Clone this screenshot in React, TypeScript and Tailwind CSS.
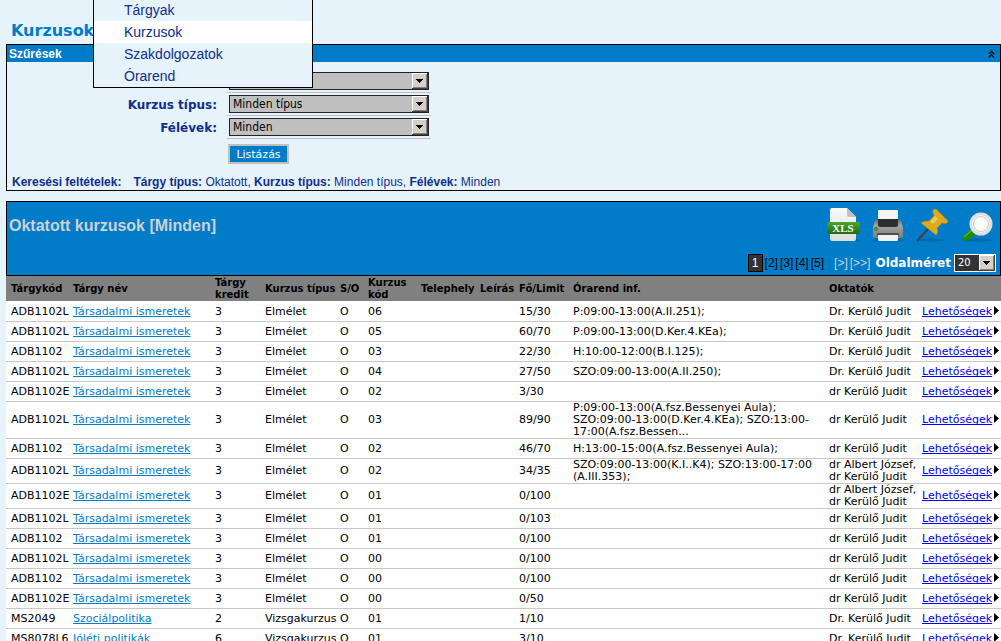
import { ReactNode } from "react";

type Course = {
  code: string;
  name: string;
  credit: number;
  type: string;
  group: string;
  limit: string;
  schedule?: string[];
  teachers: string[];
};

const social = { name: "Társadalmi ismeretek", credit: 3, type: "Elmélet" };

const courses: Course[] = [
  { ...social, code: "ADB1102L", group: "06", limit: "15/30", schedule: ["P:09:00-13:00(A.II.251);"], teachers: ["Dr. Kerülő Judit"] },
  { ...social, code: "ADB1102L", group: "05", limit: "60/70", schedule: ["P:09:00-13:00(D.Ker.4.KEa);"], teachers: ["Dr. Kerülő Judit"] },
  { ...social, code: "ADB1102", group: "03", limit: "22/30", schedule: ["H:10:00-12:00(B.I.125);"], teachers: ["Dr. Kerülő Judit"] },
  { ...social, code: "ADB1102L", group: "04", limit: "27/50", schedule: ["SZO:09:00-13:00(A.II.250);"], teachers: ["Dr. Kerülő Judit"] },
  { ...social, code: "ADB1102E", group: "02", limit: "3/30", teachers: ["dr Kerülő Judit"] },
  {
    ...social,
    code: "ADB1102L",
    group: "03",
    limit: "89/90",
    schedule: ["P:09:00-13:00(A.fsz.Bessenyei Aula);", "SZO:09:00-13:00(D.Ker.4.KEa); SZO:13:00-", "17:00(A.fsz.Bessen..."],
    teachers: ["dr Kerülő Judit"],
  },
  { ...social, code: "ADB1102", group: "02", limit: "46/70", schedule: ["H:13:00-15:00(A.fsz.Bessenyei Aula);"], teachers: ["dr Kerülő Judit"] },
  {
    ...social,
    code: "ADB1102L",
    group: "02",
    limit: "34/35",
    schedule: ["SZO:09:00-13:00(K.I..K4); SZO:13:00-17:00", "(A.III.353);"],
    teachers: ["dr Albert József,", "dr Kerülő Judit"],
  },
  { ...social, code: "ADB1102E", group: "01", limit: "0/100", teachers: ["dr Albert József,", "dr Kerülő Judit"] },
  { ...social, code: "ADB1102L", group: "01", limit: "0/103", teachers: ["dr Kerülő Judit"] },
  { ...social, code: "ADB1102", group: "01", limit: "0/100", teachers: ["dr Kerülő Judit"] },
  { ...social, code: "ADB1102L", group: "00", limit: "0/100", teachers: ["dr Kerülő Judit"] },
  { ...social, code: "ADB1102", group: "00", limit: "0/100", teachers: ["dr Kerülő Judit"] },
  { ...social, code: "ADB1102E", group: "00", limit: "0/50", teachers: ["dr Kerülő Judit"] },
  { code: "MS2049", name: "Szociálpolitika", credit: 2, type: "Vizsgakurzus", group: "01", limit: "1/10", teachers: ["Dr. Kerülő Judit"] },
  { code: "MS8078L6", name: "Jóléti politikák", credit: 6, type: "Vizsgakurzus", group: "01", limit: "3/10", teachers: ["Dr. Kerülő Judit"] },
];

const menuItems = ["Tárgyak", "Kurzusok", "Szakdolgozatok", "Órarend"];

const Menu = () => (
  <nav className="absolute top-0 left-[93px] z-10 w-[220px] border border-t-0 border-black bg-[#e6f3fb] font-['Liberation_Sans',Arial,sans-serif] text-sm text-[#0f2f8a]">
    {menuItems.map((item) => (
      <a key={item} href="#" className={`block h-[22px] pl-[30px] leading-[22px] first:h-[21px] first:leading-5 ${item === "Kurzusok" ? "bg-white" : ""}`}>
        {item}
      </a>
    ))}
  </nav>
);

const DropButton = ({ className }: { className: string }) => (
  <svg className={className} viewBox="0 0 16 16" shapeRendering="crispEdges" aria-hidden="true">
    <rect width="16" height="16" fill="#404040" />
    <rect width="15" height="15" fill="#fff" />
    <rect x="1" y="1" width="14" height="14" fill="#808080" />
    <rect x="1" y="1" width="13" height="13" fill="#d4d0c8" />
    <path d="M4 6h7v1H4zM5 7h5v1H5zM6 8h3v1H6zM7 9h1v1H7z" fill="#000" />
  </svg>
);

const FilterSelect = ({ id, label, value, ariaLabel }: { id: string; label?: string; value: string; ariaLabel?: string }) => (
  <div className="flex h-[23px] items-start justify-start">
    <div className="w-[210px] pt-0.5 text-right text-xs leading-4 font-bold">
      {label && <label htmlFor={id}>{label}</label>}
    </div>
    <div className="relative ml-[10px] h-[21px] w-[204px] border-b border-[#c0c0c0] pl-[2px]">
      <select
        id={id}
        aria-label={ariaLabel}
        className="block h-[18px] w-[200px] appearance-none border border-[#222] bg-[#c0c0c0] pl-[3px] font-['DejaVu_Sans_Condensed','DejaVu_Sans',sans-serif] text-xs leading-4 text-black"
      >
        <option>{value}</option>
      </select>
      <DropButton className="pointer-events-none absolute top-px right-[3px] h-4 w-4" />
    </div>
  </div>
);

const Filters = () => (
  <section className="border border-black">
    <div className="flex h-[17px] items-center justify-between bg-[#007cc8] pr-[5px] pl-[2px] font-['Liberation_Sans',Arial,sans-serif] text-xs font-bold text-white">
      <h2>Szűrések</h2>
      <button type="button" aria-label="Összecsukás">
        <svg className="h-2 w-[7px]" viewBox="0 0 7 8" fill="none" stroke="#000" strokeWidth="1.3">
          <path d="M1 4L3.5 1.2L6 4M1 7.5L3.5 4.7L6 7.5" />
        </svg>
      </button>
    </div>
    <form className="pt-[10px]" onSubmit={(e) => e.preventDefault()}>
      <FilterSelect id="subject-type" ariaLabel="Tárgy típus" value="Oktatott" />
      <FilterSelect id="course-type" label="Kurzus típus:" value="Minden típus" />
      <FilterSelect id="terms" label="Félévek:" value="Minden" />
      <button type="submit" className="mt-[3px] ml-[221px] block h-5 w-[61px] border-2 border-[#c0c0c0] bg-[#007cc8] pt-px text-[11px] leading-4 text-white">
        Listázás
      </button>
    </form>
    <p className="mt-[10px] pl-[5px] font-['Liberation_Sans',Arial,sans-serif] text-xs leading-4">
      <b className="mr-3">Keresési feltételek:</b>
      <b>Tárgy típus:</b> Oktatott, <b>Kurzus típus:</b> Minden típus, <b>Félévek:</b> Minden
    </p>
  </section>
);

const XlsIcon = () => (
  <svg className="h-9 w-9" viewBox="0 0 36 36" aria-hidden="true">
    <defs>
      <linearGradient id="xls-page" x1="0" y1="0" x2="0" y2="1">
        <stop offset="0" stopColor="#fafafa" />
        <stop offset="1" stopColor="#dcdedb" />
      </linearGradient>
      <linearGradient id="xls-band" x1="0" y1="0" x2="0" y2="1">
        <stop offset="0" stopColor="#4da62f" />
        <stop offset="1" stopColor="#1c6e0c" />
      </linearGradient>
    </defs>
    <ellipse cx="18" cy="33" rx="16" ry="1.5" fill="#0068a8" />
    <path d="M5 3a2 2 0 0 1 2-2h15l9 9v22a2 2 0 0 1-2 2H7a2 2 0 0 1-2-2z" fill="url(#xls-page)" />
    <path d="M22 1l9 9h-7a2 2 0 0 1-2-2z" fill="#c0c2be" />
    <rect x="2" y="15" width="33" height="12" rx="2" fill="url(#xls-band)" />
    <text x="18" y="25" textAnchor="middle" fontFamily="'Liberation Serif', serif" fontWeight="bold" fontSize="11" fill="#fff">
      XLS
    </text>
  </svg>
);

const PrintIcon = () => (
  <svg className="h-9 w-9" viewBox="0 0 36 36" aria-hidden="true">
    <defs>
      <linearGradient id="printer-body" x1="0" y1="0" x2="0" y2="1">
        <stop offset="0" stopColor="#6e706d" />
        <stop offset="0.3" stopColor="#a3a5a2" />
        <stop offset="1" stopColor="#7a7c79" />
      </linearGradient>
    </defs>
    <ellipse cx="18" cy="33" rx="16" ry="1.5" fill="#0068a8" />
    <path d="M8 4a1 1 0 0 1 1-1h18a1 1 0 0 1 1 1v10H8z" fill="#f4f4f3" />
    <path d="M5 13h26l2 8v8a2 2 0 0 1-2 2H5a2 2 0 0 1-2-2v-8z" fill="url(#printer-body)" />
    <path d="M8 12h20v6a2 2 0 0 1-2 2H10a2 2 0 0 1-2-2z" fill="#2a2e30" />
    <circle cx="6" cy="22" r="1.5" fill="#4fc52b" stroke="#33511f" strokeWidth="0.7" />
    <path d="M7 26h22v3H7z" fill="#4d4f4d" />
    <path d="M8 28h20v5a1 1 0 0 1-1 1H9a1 1 0 0 1-1-1z" fill="#f1f1ef" />
  </svg>
);

const PinIcon = () => (
  <svg className="h-9 w-9" viewBox="0 0 36 36" aria-hidden="true">
    <ellipse cx="16" cy="33" rx="14" ry="1.5" fill="#0068a8" />
    <path d="M14 21L2 34" stroke="#3c4143" strokeWidth="2" />
    <path d="M18 3l3-1 12 12-1 2c-2 1-4 0-5 0l-5 5c1 3 1 5-1 7L6 16c2-2 6-2 8-2l5-5c0-2-2-4-1-6z" fill="#dcaa1c" stroke="#b98a10" strokeWidth="0.6" />
    <path d="M20 9l-5 6 3 2 5-5z" fill="#f0cd50" />
  </svg>
);

const SearchIcon = () => (
  <svg className="h-9 w-9" viewBox="0 0 36 36" aria-hidden="true">
    <ellipse cx="17" cy="33" rx="15" ry="1.5" fill="#0068a8" />
    <path d="M13 20l5 5-9 8c-4 2-8 0-6-4z" fill="#1f8c08" />
    <path d="M13 22L4 30" stroke="#4dbb2e" strokeWidth="1.5" />
    <circle cx="21" cy="17" r="10" fill="#fff" stroke="#dfe1e0" strokeWidth="3" />
    <circle cx="21" cy="17" r="7.5" fill="none" stroke="#c4c8c8" />
  </svg>
);

const ToolButton = ({ label, children }: { label: string; children: ReactNode }) => (
  <button type="button" aria-label={label}>
    {children}
  </button>
);

const Toolbar = () => (
  <div className="flex h-[75px] justify-between border border-black bg-[#007cc8]">
    <h2 className="pt-[14px] pl-[2px] font-['Liberation_Sans',Arial,sans-serif] text-base leading-5 font-bold text-[#d0d0d0]">Oktatott kurzusok [Minden]</h2>
    <div className="flex flex-col items-end justify-between pt-[5px] pr-1 pb-[3px]">
      <div className="flex gap-[9px]">
        <ToolButton label="Exportálás"><XlsIcon /></ToolButton>
        <ToolButton label="Nyomtatás"><PrintIcon /></ToolButton>
        <ToolButton label="Rögzítés"><PinIcon /></ToolButton>
        <ToolButton label="Keresés"><SearchIcon /></ToolButton>
      </div>
      <div className="flex items-center text-xs">
        <div className="flex items-center gap-[2px] font-['Liberation_Sans',Arial,sans-serif] text-black">
          <span className="w-[15px] border border-black bg-[#333] text-center leading-4 text-white">1</span>
          {[2, 3, 4, 5].map((page) => (
            <a key={page} href="#">[{page}]</a>
          ))}
          <a href="#" className="ml-2 text-[#d0d0d0]">[&gt;]</a>
          <a href="#" className="text-[#d0d0d0]">[&gt;&gt;]</a>
        </div>
        <label htmlFor="page-size" className="mr-[3px] ml-[5px] font-bold text-white">Oldalméret</label>
        <div className="relative">
          <select
            id="page-size"
            className="block h-[18px] w-[42px] appearance-none border border-white bg-[#333] pl-[3px] font-['DejaVu_Sans_Condensed','DejaVu_Sans',sans-serif] text-[11px] leading-4 text-white"
          >
            <option>20</option>
          </select>
          <DropButton className="pointer-events-none absolute top-px right-px h-4 w-4" />
        </div>
      </div>
    </div>
  </div>
);

const CourseTable = () => (
  <table className="w-full table-fixed border-collapse bg-white text-[11px] leading-3 whitespace-nowrap text-black">
    <colgroup>
      <col className="w-[62px]" />
      <col className="w-[142px]" />
      <col className="w-[50px]" />
      <col className="w-[75px]" />
      <col className="w-[28px]" />
      <col className="w-[53px]" />
      <col className="w-[59px]" />
      <col className="w-[39px]" />
      <col className="w-[54px]" />
      <col />
      <col className="w-[93px]" />
      <col className="w-[84px]" />
    </colgroup>
    <thead className="text-[10px]">
      <tr className="h-[25px] border-b border-white bg-[#808080] text-left [&>th]:p-0 [&>th]:pt-px [&>th]:pl-[5px]">
        <th>Tárgykód</th>
        <th>Tárgy név</th>
        <th>Tárgy<br />kredit</th>
        <th>Kurzus típus</th>
        <th>S/O</th>
        <th>Kurzus<br />kód</th>
        <th>Telephely</th>
        <th>Leírás</th>
        <th>Fő/Limit</th>
        <th>Órarend inf.</th>
        <th>Oktatók</th>
        <th aria-label="Lehetőségek" />
      </tr>
    </thead>
    <tbody>
      {courses.map((course, i) => (
        <tr key={i} className="h-5 border-b border-[#c8c8c8] [&>td]:p-0 [&>td]:pl-[5px]">
          <td>{course.code}</td>
          <td><a href="#" className="text-[#007cc8] underline [text-decoration-skip-ink:none]">{course.name}</a></td>
          <td>{course.credit}</td>
          <td>{course.type}</td>
          <td>O</td>
          <td>{course.group}</td>
          <td />
          <td />
          <td>{course.limit}</td>
          <td>{course.schedule?.map((line) => <div key={line}>{line}</div>)}</td>
          <td>{course.teachers.map((teacher) => <div key={teacher}>{teacher}</div>)}</td>
          <td>
            <div className="flex items-start justify-between pr-0.5">
              <a href="#" className="text-[#0000ee] underline [text-decoration-skip-ink:none]">Lehetőségek</a>
              <svg className="h-[9px] w-[5px]" viewBox="0 0 5 9" aria-hidden="true">
                <path d="M0 0l5 4.5L0 9z" />
              </svg>
            </div>
          </td>
        </tr>
      ))}
    </tbody>
  </table>
);

const App = () => {
  return (
    <div className="relative min-h-screen bg-[#e6f3fb] pl-[6px] font-['DejaVu_Sans',Verdana,sans-serif] text-[#0f2f8a]">
      <Menu />
      <h1 className="pt-[21px] pb-[3px] pl-[5px] text-base leading-5 font-bold text-[#007cc8]">Kurzusok</h1>
      <Filters />
      <main className="mt-[10px]">
        <Toolbar />
        <CourseTable />
      </main>
    </div>
  );
};

export default App;
